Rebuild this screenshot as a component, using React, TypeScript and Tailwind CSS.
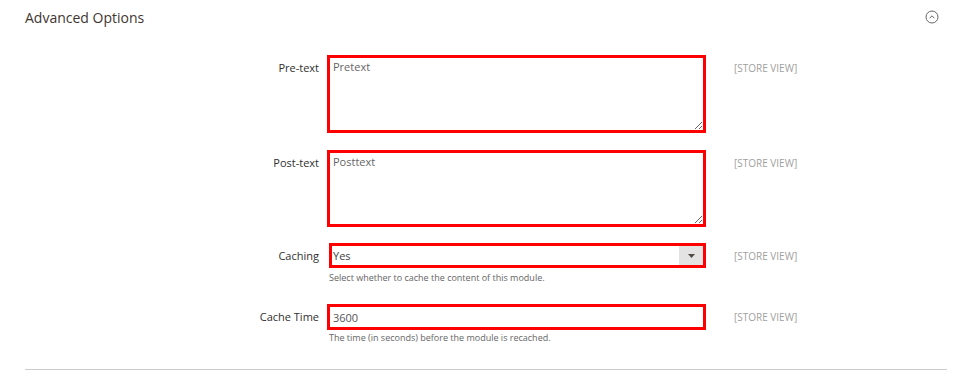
import React from "react";

function StoreView() {
  return (
    <span className="ml-[28px] text-[10px] leading-[26px] text-[#a0a0a0] uppercase">
      [Store View]
    </span>
  );
}

function Label({ children }: { children: React.ReactNode }) {
  return (
    <label className="w-[302px] shrink-0 pr-[8px] text-right text-[11px] leading-[26px] text-[#303030]">
      {children}
    </label>
  );
}

export default function App() {
  return (
    <main className="w-[963px] h-[377px] bg-white pl-[25px] pr-[16px] font-['Open_Sans',sans-serif]">
      {/* Section header */}
      <header className="flex h-[34px] items-center justify-between">
        <h2 className="text-[14px] text-[#41362f]">Advanced Options</h2>
        <svg width="14" height="14" viewBox="0 0 14 14" className="mr-[8px]">
          <circle cx="7" cy="7" r="6" fill="none" stroke="#666" strokeWidth="1" />
          <path d="M4.6 8.2 L7 5.8 L9.4 8.2" fill="none" stroke="#666" strokeWidth="1" />
        </svg>
      </header>

      <div className="mt-[21px] flex flex-col">
        <div className="flex items-start">
          <Label>Pre-text</Label>
          <textarea
            readOnly
            defaultValue="Pretext"
            className="h-[78px] w-[379px] border-[3px] border-[#ff0000] px-[3px] pt-[2px] text-[11px] leading-[14px] text-[#666] outline-none"
          />
          <StoreView />
        </div>

        <div className="mt-[17px] flex items-start">
          <Label>Post-text</Label>
          <textarea
            readOnly
            defaultValue="Posttext"
            className="h-[77px] w-[379px] border-[3px] border-[#ff0000] px-[3px] pt-[2px] text-[11px] leading-[14px] text-[#666] outline-none"
          />
          <StoreView />
        </div>

        <div className="mt-[16px] flex items-start">
          <Label>Caching</Label>
          <div className="flex w-[379px] flex-col pl-[2px]">
            <div className="flex h-[25px] items-stretch border-[3px] border-[#ff0000] bg-white">
              <span className="flex-1 pl-[1px] text-[11px] leading-[19px] text-[#444]">Yes</span>
              <span className="flex w-[24px] items-center justify-center bg-[#e3e3e3]">
                <svg width="7" height="4" viewBox="0 0 7 4">
                  <path d="M0 0 H7 L3.5 4 Z" fill="#514943" />
                </svg>
              </span>
            </div>
            <p className="mt-[4px] text-[9px] leading-[12px] text-[#666]">
              Select whether to cache the content of this module.
            </p>
          </div>
          <StoreView />
        </div>

        <div className="mt-[20px] flex items-start">
          <Label>Cache Time</Label>
          <div className="flex w-[379px] flex-col">
            <input
              readOnly
              defaultValue="3600"
              className="h-[26px] w-full border-[3px] border-[#ff0000] px-[3px] text-[11px] text-[#555] outline-none"
            />
            <p className="mt-[2px] pl-[2px] text-[9px] leading-[12px] text-[#666]">
              The time (in seconds) before the module is recached.
            </p>
          </div>
          <StoreView />
        </div>
      </div>

      <div className="mt-[25px] border-t border-[#cccccc]" />
    </main>
  );
}
